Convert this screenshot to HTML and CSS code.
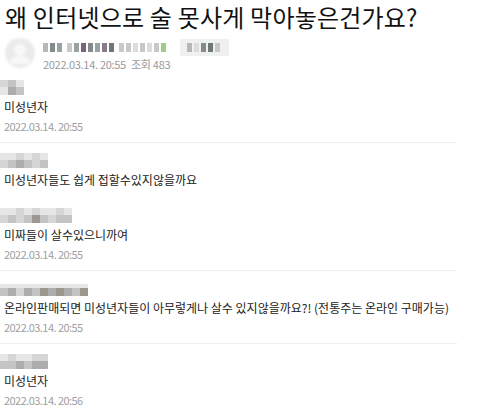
FILE: index.html
```html
<!DOCTYPE html>
<html>
<head>
  <meta charset="utf-8">
  <title>게시글</title>
  <link rel="stylesheet" href="styles.css">
</head>
<body>
  <h1 class="title">왜 인터넷으로 술 못사게 막아놓은건가요?</h1>
  <div class="post_info">
    <svg class="avatar" width="30" height="30" viewBox="0 0 30 30">
      <circle cx="15" cy="15" r="15" fill="#ebebeb"/>
      <circle cx="15" cy="12" r="6" fill="#f8f8f8"/>
      <path d="M4 26 Q6 18 15 18 Q24 18 26 26 Z" fill="#f8f8f8"/>
    </svg>
    <div class="writer">
      <div class="nick_line">
        <span class="px g3"></span><span class="px g5"></span><span class="px g4"></span>
        <span class="px g2 sp"></span><span class="px g4"></span><span class="px p1"></span>
        <span class="px g5"></span><span class="px g4"></span><span class="px p2"></span>
        <span class="px g6"></span><span class="px g2 sp"></span><span class="px g2"></span>
        <span class="px g1"></span><span class="px g2"></span><span class="px g1"></span>
        <span class="px g2"></span><span class="px gr"></span>
        <span class="nick_box">
          <span class="px g3"></span><span class="px g1"></span><span class="px g5"></span><span class="px g6"></span><span class="px g2"></span>
        </span>
      </div>
      <p class="meta">2022.03.14. 20:55 <span class="views">조회 483</span></p>
    </div>
  </div>

  <ul class="comments">
    <li class="comment">
      <div class="mosaic">
        <span class="c2"></span><span class="c1"></span>
        <span class="c3"></span><span class="c4"></span>
        <span class="c1"></span><span class="c3"></span>
      </div>
      <p class="text">미성년자</p>
      <p class="date">2022.03.14. 20:55</p>
    </li>
    <li class="comment no_date">
      <div class="mosaic">
        <span class="c1"></span><span class="c2"></span>
        <span class="c1"></span><span class="c3"></span>
        <span class="c2"></span><span class="c4"></span>
        <span class="c1"></span><span class="c3"></span>
        <span class="c2"></span><span class="c2"></span>
        <span class="c1"></span><span class="c3"></span>
      </div>
      <p class="text">미성년자들도 쉽게 접할수있지않을까요</p>
    </li>
    <li class="comment">
      <div class="mosaic">
        <span class="c1"></span><span class="c2"></span>
        <span class="c1"></span><span class="c3"></span>
        <span class="c2"></span><span class="c2"></span>
        <span class="c1"></span><span class="c3"></span>
        <span class="c2"></span><span class="c5"></span>
        <span class="c1"></span><span class="c3"></span>
        <span class="c1"></span><span class="c2"></span>
        <span class="c2"></span><span class="c3"></span>
        <span class="c1"></span><span class="c3"></span>
      </div>
      <p class="text">미짜들이 살수있으니까여</p>
      <p class="date">2022.03.14. 20:55</p>
    </li>
    <li class="comment">
      <div class="mosaic flat">
        <span class="c1"></span><span class="c3"></span>
        <span class="c1"></span><span class="c4"></span>
        <span class="c1"></span><span class="c2"></span>
        <span class="c1"></span><span class="c4"></span>
        <span class="c1"></span><span class="c3"></span>
        <span class="c1"></span><span class="c5"></span>
        <span class="c1"></span><span class="c4"></span>
        <span class="c1"></span><span class="c5"></span>
        <span class="c1"></span><span class="c4"></span>
        <span class="c1"></span><span class="c3"></span>
        <span class="c1"></span><span class="c5"></span>
      </div>
      <p class="text">온라인판매되면 미성년자들이 아무렇게나 살수 있지않을까요?! (전통주는 온라인 구매가능)</p>
      <p class="date">2022.03.14. 20:55</p>
    </li>
    <li class="comment">
      <div class="mosaic">
        <span class="c1"></span><span class="c3"></span>
        <span class="c2"></span><span class="c3"></span>
        <span class="c1"></span><span class="c4"></span>
        <span class="c1"></span><span class="c3"></span>
        <span class="c2"></span><span class="c4"></span>
        <span class="c2"></span><span class="c4"></span>
      </div>
      <p class="text">미성년자</p>
      <p class="date">2022.03.14. 20:56</p>
    </li>
  </ul>
</body>
</html>
```

FILE: styles.css
```css
body {
  margin: 0;
  background-color: #fff;
  color: #222;
  font-family: "Noto Sans CJK KR", "Noto Sans", sans-serif;
}
p {
  margin: 0;
}
.title {
  margin: 0;
  padding-left: 5px;
  font-size: 24px;
  font-weight: 400;
  line-height: 34px;
  letter-spacing: 0.2px;
  color: #111;
}

/* post writer */
.post_info {
  display: flex;
  align-items: flex-start;
  gap: 8px;
  padding: 4px 0 0 5px;
  height: 40px;
}
.avatar {
  filter: blur(0.8px);
}
.writer {
  padding-top: 1px;
}
.nick_line {
  display: flex;
  align-items: center;
  height: 17px;
  filter: blur(0.5px);
}
.px {
  display: inline-block;
  width: 5px;
  height: 9px;
  margin-right: 2px;
}
.sp {
  margin-left: 3px;
}
.nick_box {
  display: inline-flex;
  align-items: center;
  margin-left: 12px;
  padding: 0 7px;
  height: 17px;
  background-color: #f0f0f0;
}
.g1 { background-color: #dcdcdc; }
.g2 { background-color: #c8c8c8; }
.g3 { background-color: #b4b8bc; }
.g4 { background-color: #9aa2a4; }
.g5 { background-color: #838c8c; }
.g6 { background-color: #6f7777; }
.p1 { background-color: #76667e; }
.p2 { background-color: #8a7a8c; }
.gr { background-color: #9ccc88; }
.meta {
  margin-top: 1px;
  font-size: 11px;
  line-height: 14px;
  color: #999;
  letter-spacing: -0.3px;
}
.views {
  margin-left: 3px;
}

/* comments */
.comments {
  list-style: none;
  margin: 0;
  padding: 0;
  width: 457px;
}
.comment {
  padding: 10px 0 7px;
  border-bottom: 1px solid #eee;
}
.comment:first-child {
  padding-top: 2px;
}
.comment.no_date {
  border-bottom: none;
  padding-bottom: 9px;
}
.mosaic {
  display: grid;
  grid-auto-flow: column;
  grid-template-rows: 7px 8px;
  grid-auto-columns: 8px;
  width: max-content;
  filter: blur(0.4px);
}
.mosaic.flat {
  grid-template-rows: 4px 8px;
  padding-top: 3px;
}
.c1 { background-color: #e6e6e6; }
.c2 { background-color: #d6d6d6; }
.c3 { background-color: #c4c4c4; }
.c4 { background-color: #adadad; }
.c5 { background-color: #9c9890; }
.text {
  margin-top: 3px;
  padding-left: 4px;
  font-size: 12px;
  line-height: 18px;
  letter-spacing: 0;
  color: #222;
}
.date {
  margin-top: 1px;
  padding-left: 4px;
  font-size: 11px;
  line-height: 18px;
  letter-spacing: -0.55px;
  color: #a0a0a0;
}
```
